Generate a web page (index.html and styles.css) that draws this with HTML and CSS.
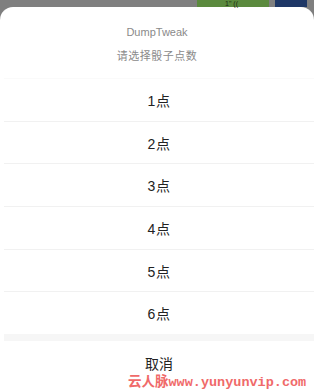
FILE: index.html
```html
<!DOCTYPE html>
<html lang="zh">
<head>
<meta charset="utf-8">
<link rel="stylesheet" href="styles.css">
</head>
<body>
<div class="backdrop">
  <div class="bg-green">1" ((</div>
  <div class="bg-blue"></div>
</div>
<div class="sheet">
  <div class="header">
    <div class="title">DumpTweak</div>
    <div class="subtitle">请选择骰子点数</div>
  </div>
  <ul class="list">
    <li class="item">1点</li>
    <li class="item">2点</li>
    <li class="item">3点</li>
    <li class="item">4点</li>
    <li class="item">5点</li>
    <li class="item">6点</li>
  </ul>
  <div class="gap"></div>
  <div class="cancel">取消</div>
</div>
<div class="watermark">云人脉www.yunyunvip.com</div>
</body>
</html>
```

FILE: styles.css
```css
* { box-sizing: border-box; }
html, body {
  margin: 0;
  padding: 0;
  width: 314px;
  height: 391px;
  overflow: hidden;
  background: #7f7f7f;
  font-family: "Liberation Sans", "Noto Sans CJK SC", sans-serif;
  position: relative;
}
.backdrop {
  height: 7px;
  position: relative;
}
.bg-green {
  position: absolute;
  left: 197px;
  top: 0;
  width: 72px;
  height: 7px;
  background: #5b8a3e;
  color: #1d2a14;
  font-size: 7px;
  line-height: 7px;
  padding-left: 28px;
  white-space: nowrap;
}
.bg-blue {
  position: absolute;
  left: 275px;
  top: 0;
  width: 32px;
  height: 7px;
  background: #1e3766;
}
.sheet {
  background: #fff;
  border-radius: 13px 13px 0 0;
  width: 314px;
  min-height: 384px;
}
.header {
  height: 71px;
  display: flex;
  flex-direction: column;
  align-items: center;
  padding-top: 18px;
  gap: 9px;
  color: #8a8a8a;
  font-size: 11px;
  line-height: 15px;
}
.subtitle { letter-spacing: 0.5px; }
.list {
  list-style: none;
  margin: 0;
  padding: 0 0 0 4px;
}
.item {
  height: 42.7px;
  display: flex;
  align-items: center;
  justify-content: center;
  font-size: 14px;
  color: #222;
  border-top: 1px solid #f1f1f1;
  letter-spacing: 0.5px;
}
.item:first-child { border-top-color: #fafafa; }
.gap {
  height: 7px;
  margin-left: 4px;
  background: #f6f6f6;
}
.cancel {
  height: 43px;
  display: flex;
  align-items: center;
  justify-content: center;
  font-size: 14px;
  color: #222;
  padding-left: 4px;
}
.watermark {
  position: absolute;
  left: 128px;
  top: 374px;
  font-family: "Liberation Mono", "Noto Sans CJK SC", monospace;
  font-weight: bold;
  font-size: 13.5px;
  line-height: 17px;
  color: #f06a6a;
  white-space: nowrap;
}
```
